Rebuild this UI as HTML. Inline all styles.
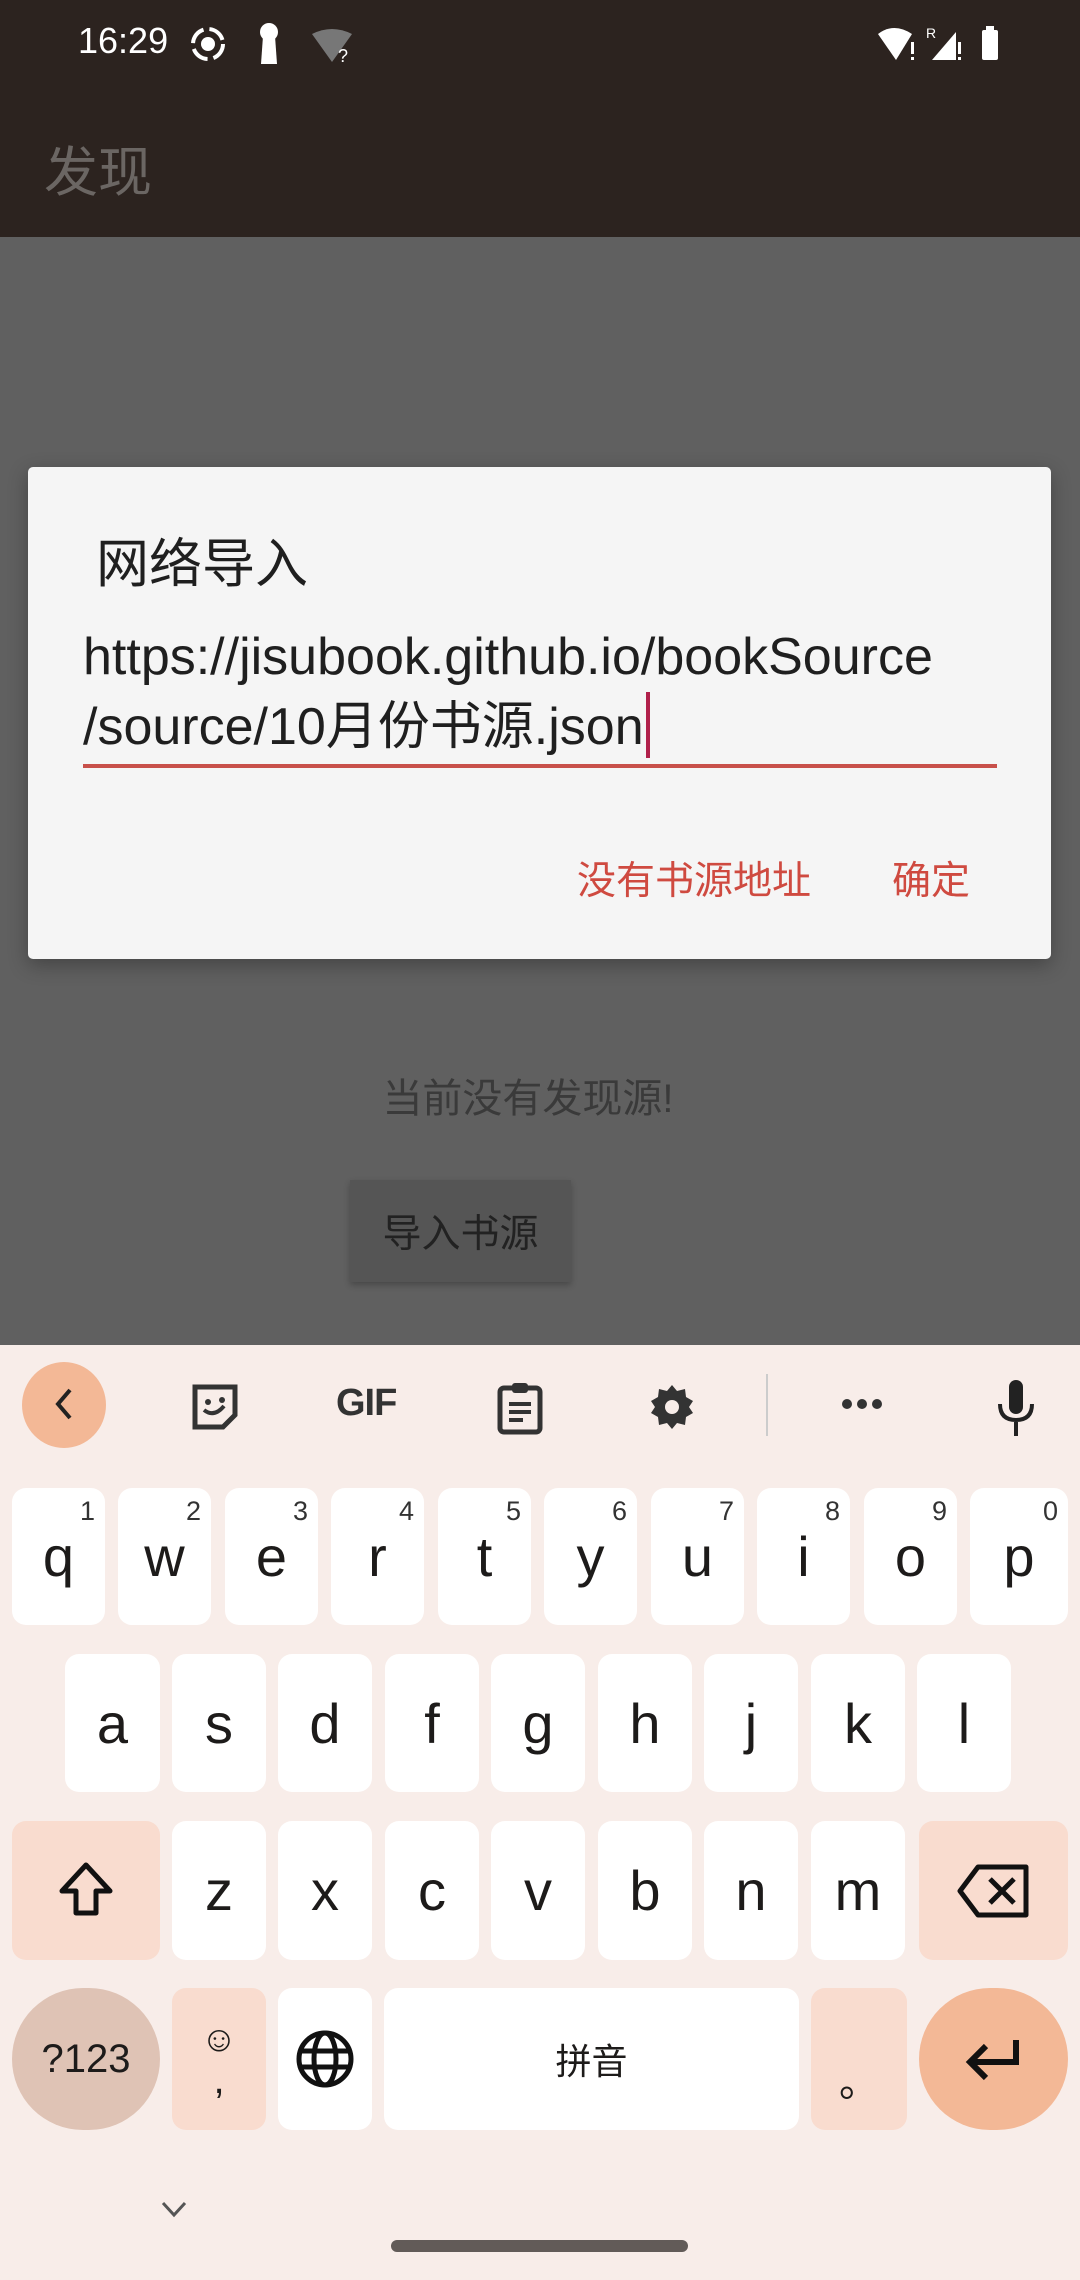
<!DOCTYPE html>
<html><head><meta charset="utf-8"><style>
*{margin:0;padding:0;box-sizing:border-box}
body{width:1080px;height:2280px;position:relative;overflow:hidden;background:#606060;font-family:"Liberation Sans","Noto Sans CJK SC",sans-serif}
.a{position:absolute}
.k{position:absolute;background:#fff;border-radius:14px;display:flex;align-items:center;justify-content:center;font-size:56px;color:#1d1b1a}
.k sup{position:absolute;top:8px;right:10px;font-size:27px;color:#333}
.p{background:#f9dccf}
</style></head><body>
<div class="a" style="left:0;top:0;width:1080px;height:237px;background:#2c231f"></div>
<div class="a" style="left:78px;top:20px;color:#fff;font-size:36px;">16:29</div>
<svg class="a" style="left:188px;top:24px" width="40" height="40" viewBox="0 0 40 40"><circle cx="20" cy="20" r="15" fill="none" stroke="#fff" stroke-width="4" stroke-dasharray="18 6"/><circle cx="20" cy="20" r="7" fill="#fff"/></svg>
<svg class="a" style="left:256px;top:22px" width="26" height="44" viewBox="0 0 26 44"><circle cx="13" cy="10" r="9" fill="#fff"/><path d="M7 14h12l2 28H5z" fill="#fff"/></svg>
<svg class="a" style="left:310px;top:28px" width="44" height="36" viewBox="0 0 44 36"><path d="M2 6Q22-4 42 6L22 34z" fill="#777"/><text x="28" y="34" font-size="18" fill="#fff">?</text></svg>
<svg class="a" style="left:876px;top:24px" width="140" height="40" viewBox="0 0 140 40"><path d="M2 10Q18-2 36 10L20 36z" fill="#fff"/><rect x="35" y="18" width="3" height="12" fill="#fff"/><rect x="35" y="33" width="3" height="3" fill="#fff"/><text x="50" y="14" font-size="14" fill="#fff">R</text><path d="M56 36L80 8V36z" fill="#fff"/><rect x="82" y="18" width="3" height="12" fill="#fff"/><rect x="82" y="33" width="3" height="3" fill="#fff"/><rect x="106" y="6" width="16" height="30" rx="2" fill="#fff"/><rect x="110" y="2" width="8" height="5" fill="#fff"/></svg>
<div class="a" style="left:44px;top:128px;color:#6b6663;font-size:54px">发现</div>
<div class="a" style="left:0;top:1066px;width:1056px;text-align:center;color:#3a3a3a;font-size:40px">当前没有发现源!</div>
<div class="a" style="left:350px;top:1180px;width:221px;height:102px;background:#555;box-shadow:0 3px 6px rgba(0,0,0,.25);color:#222;font-size:39px;display:flex;align-items:center;justify-content:center">导入书源</div>
<div class="a" style="left:28px;top:467px;width:1023px;height:492px;background:#f5f5f5;border-radius:5px;box-shadow:0 6px 20px rgba(0,0,0,.3)"></div>
<div class="a" style="left:96px;top:522px;color:#1f1f1f;font-size:53px">网络导入</div>
<div class="a" style="left:83px;top:623px;color:#1f1f1f;font-size:52px;line-height:69px;white-space:nowrap">https://jisubook.github.io/bookSource<br>/source/10月份书源.json<span style="display:inline-block;width:4px;height:66px;background:#b0204a;vertical-align:-14px;margin-left:2px"></span></div>
<div class="a" style="left:83px;top:764px;width:914px;height:4px;background:#c8504a"></div>
<div class="a" style="left:577px;top:850px;color:#cf4a40;font-size:39px">没有书源地址</div>
<div class="a" style="left:892px;top:850px;color:#cf4a40;font-size:39px">确定</div>
<div class="a" style="left:0;top:1345px;width:1080px;height:935px;background:#f8ede9"></div>
<div class="a" style="left:22px;top:1362px;width:84px;height:86px;border-radius:50%;background:#f3b896"></div>
<svg class="a" style="left:48px;top:1384px" width="30" height="40" viewBox="0 0 30 40"><path d="M22 6L10 20l12 14" fill="none" stroke="#222" stroke-width="4"/></svg>
<svg class="a" style="left:190px;top:1382px" width="50" height="50" viewBox="0 0 50 50"><path d="M5 5h40v28L33 45H5z" fill="none" stroke="#333" stroke-width="5"/><circle cx="18" cy="20" r="3" fill="#333"/><circle cx="32" cy="18" r="3" fill="#333"/><path d="M14 28q10 8 20-4" fill="none" stroke="#333" stroke-width="4"/></svg>
<div class="a" style="left:336px;top:1382px;font-size:38px;font-weight:bold;color:#333;letter-spacing:-1px">GIF</div>
<svg class="a" style="left:496px;top:1380px" width="48" height="56" viewBox="0 0 48 56"><rect x="4" y="8" width="40" height="44" rx="4" fill="none" stroke="#333" stroke-width="5"/><rect x="16" y="3" width="16" height="10" rx="3" fill="#333"/><path d="M13 24h22M13 32h22M13 40h14" stroke="#333" stroke-width="4"/></svg>
<svg class="a" style="left:648px;top:1382px" width="48" height="50" viewBox="0 0 48 48"><path d="M24 2l5 6 8-2 1 8 7 4-4 6 4 6-7 4-1 8-8-2-5 6-5-6-8 2-1-8-7-4 4-6-4-6 7-4 1-8 8 2z" fill="#333"/><circle cx="24" cy="24" r="7" fill="#f8ede9"/></svg>
<div class="a" style="left:766px;top:1374px;width:2px;height:62px;background:#ccc"></div>
<svg class="a" style="left:838px;top:1394px" width="48" height="20"><circle cx="9" cy="10" r="5" fill="#333"/><circle cx="24" cy="10" r="5" fill="#333"/><circle cx="39" cy="10" r="5" fill="#333"/></svg>
<svg class="a" style="left:992px;top:1378px" width="48" height="60" viewBox="0 0 48 60"><rect x="17" y="2" width="14" height="34" rx="7" fill="#222"/><path d="M8 26q0 16 16 16t16-16M24 42v16" fill="none" stroke="#222" stroke-width="4"/></svg>
<div class="k" style="left:12px;top:1488px;width:93px;height:137px">q<sup>1</sup></div>
<div class="k" style="left:118px;top:1488px;width:93px;height:137px">w<sup>2</sup></div>
<div class="k" style="left:225px;top:1488px;width:93px;height:137px">e<sup>3</sup></div>
<div class="k" style="left:331px;top:1488px;width:93px;height:137px">r<sup>4</sup></div>
<div class="k" style="left:438px;top:1488px;width:93px;height:137px">t<sup>5</sup></div>
<div class="k" style="left:544px;top:1488px;width:93px;height:137px">y<sup>6</sup></div>
<div class="k" style="left:651px;top:1488px;width:93px;height:137px">u<sup>7</sup></div>
<div class="k" style="left:757px;top:1488px;width:93px;height:137px">i<sup>8</sup></div>
<div class="k" style="left:864px;top:1488px;width:93px;height:137px">o<sup>9</sup></div>
<div class="k" style="left:970px;top:1488px;width:98px;height:137px">p<sup>0</sup></div>
<div class="k" style="left:65px;top:1654px;width:95px;height:138px">a</div>
<div class="k" style="left:172px;top:1654px;width:94px;height:138px">s</div>
<div class="k" style="left:278px;top:1654px;width:94px;height:138px">d</div>
<div class="k" style="left:385px;top:1654px;width:94px;height:138px">f</div>
<div class="k" style="left:491px;top:1654px;width:94px;height:138px">g</div>
<div class="k" style="left:598px;top:1654px;width:94px;height:138px">h</div>
<div class="k" style="left:704px;top:1654px;width:94px;height:138px">j</div>
<div class="k" style="left:811px;top:1654px;width:94px;height:138px">k</div>
<div class="k" style="left:917px;top:1654px;width:94px;height:138px">l</div>
<div class="k p" style="left:12px;top:1821px;width:148px;height:139px"><svg width="64" height="64" viewBox="0 0 64 64"><path d="M32 6L8 32h14v22h20V32h14z" fill="none" stroke="#111" stroke-width="5" stroke-linejoin="round"/></svg></div>
<div class="k" style="left:172px;top:1821px;width:94px;height:139px">z</div>
<div class="k" style="left:278px;top:1821px;width:94px;height:139px">x</div>
<div class="k" style="left:385px;top:1821px;width:94px;height:139px">c</div>
<div class="k" style="left:491px;top:1821px;width:94px;height:139px">v</div>
<div class="k" style="left:598px;top:1821px;width:94px;height:139px">b</div>
<div class="k" style="left:704px;top:1821px;width:94px;height:139px">n</div>
<div class="k" style="left:811px;top:1821px;width:94px;height:139px">m</div>
<div class="k p" style="left:919px;top:1821px;width:149px;height:139px"><svg width="76" height="60" viewBox="0 0 76 60"><path d="M22 6h48v48H22L4 30z" fill="none" stroke="#111" stroke-width="5" stroke-linejoin="round"/><path d="M34 18l24 24M58 18L34 42" stroke="#111" stroke-width="5"/></svg></div>
<div class="k" style="left:12px;top:1988px;width:148px;height:142px;border-radius:71px;background:#dfc3b5;font-size:40px">?123</div>
<div class="k p" style="left:172px;top:1988px;width:94px;height:142px;flex-direction:column;font-size:40px"><span style="font-size:36px">☺</span><span style="line-height:40px">,</span></div>
<div class="k" style="left:278px;top:1988px;width:94px;height:142px"><svg width="60" height="60" viewBox="0 0 60 60"><circle cx="30" cy="30" r="26" fill="none" stroke="#111" stroke-width="5"/><ellipse cx="30" cy="30" rx="11" ry="26" fill="none" stroke="#111" stroke-width="5"/><path d="M4 22h52M4 38h52" stroke="#111" stroke-width="5"/></svg></div>
<div class="k" style="left:384px;top:1988px;width:415px;height:142px;font-size:36px">拼音</div>
<div class="k p" style="left:811px;top:1988px;width:96px;height:142px;font-size:40px;align-items:flex-end;padding-bottom:22px">。</div>
<div class="k" style="left:919px;top:1988px;width:149px;height:142px;border-radius:71px;background:#f3b896"><svg width="60" height="50" viewBox="0 0 60 50"><path d="M52 6v22H8M22 12L6 28l16 16" fill="none" stroke="#111" stroke-width="6"/></svg></div>
<svg class="a" style="left:160px;top:2200px" width="28" height="20" viewBox="0 0 28 20"><path d="M3 3l11 12 11-12" fill="none" stroke="#555" stroke-width="3"/></svg>
<div class="a" style="left:391px;top:2240px;width:297px;height:12px;border-radius:6px;background:#625b58"></div>
</body></html>
